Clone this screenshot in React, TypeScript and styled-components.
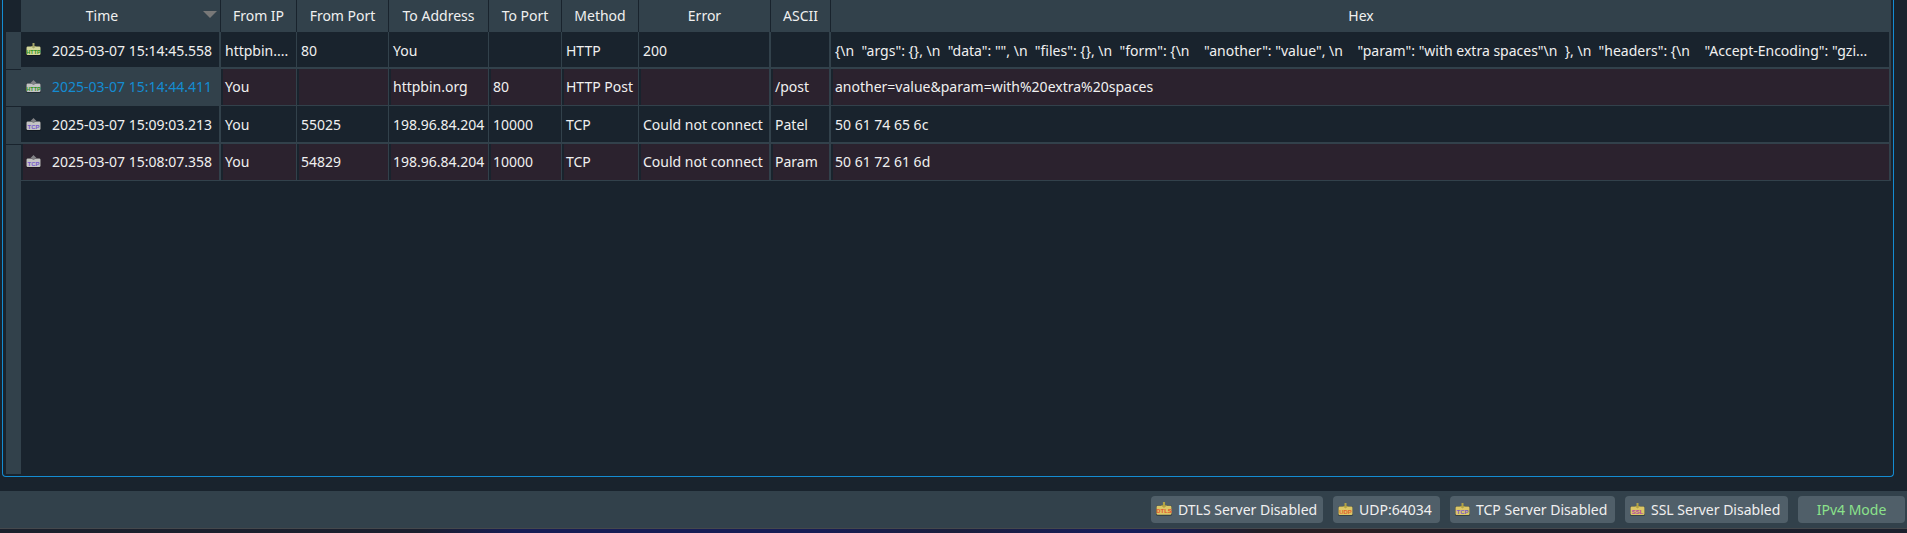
import React from "react";
import styled, { createGlobalStyle } from "styled-components";

const c = {
  base: "#19232d",
  panel: "#32414b",
  button: "#505f69",
  alt: "#2b222e",
  accent: "#148cd2",
  text: "#f0f0f0",
};

const Global = createGlobalStyle`
  * { box-sizing: border-box; }
  body {
    margin: 0;
    background: ${c.base};
    color: ${c.text};
    font: 14px/20px "Noto Sans", sans-serif;
  }
`;

const Window = styled.div`
  display: flex;
  flex-direction: column;
  min-height: 100vh;
`;

const LogPanel = styled.main`
  display: flex;
  flex: 1;
  margin: 0 13px 14px 2px;
  padding: 0 2px 2px 3px;
  border: 1px solid ${c.accent};
  border-top: 0;
  border-radius: 0 0 4px 4px;
`;

const Gutter = styled.div`
  display: flex;
  flex-direction: column;
  flex: none;
  width: 15px;
  margin-top: 32px;
  background: ${c.panel};
`;

const GutterCell = styled.div<{ $height: number }>`
  height: ${(p) => p.$height}px;
  border-bottom: 1px solid ${c.base};
`;

const TableArea = styled.div`
  flex: 1;
  min-width: 0;
`;

const Table = styled.table`
  width: 100%;
  table-layout: fixed;
  border-collapse: separate;
  border-spacing: 0;
`;

const Col = styled.col<{ $width?: number }>`
  width: ${(p) => (p.$width ? `${p.$width}px` : "auto")};
`;

const HeadCell = styled.th`
  height: 32px;
  padding: 0;
  background: ${c.panel};
  border-right: 1px solid ${c.base};
  font-weight: 400;

  &:last-child { border-right: 0; }
`;

const HeadLabel = styled.span<{ $sorted?: boolean }>`
  display: flex;
  align-items: center;
  justify-content: center;
  padding-right: ${(p) => (p.$sorted ? "3px" : "0")};

  span {
    flex: ${(p) => (p.$sorted ? 1 : "none")};
    padding-right: ${(p) => (p.$sorted ? "20px" : "0")};
  }
`;

const SortArrow = styled.svg`
  flex: none;
  display: block;
  margin-bottom: 3px;
`;

const Row = styled.tr<{ $height: number; $divider: number; $alt: boolean }>`
  height: ${(p) => p.$height}px;

  td {
    padding: ${(p) => (p.$alt ? 0 : 2)}px 2px 0 4px;
    background: ${(p) => (p.$alt ? c.alt : c.base)};
    border-bottom: ${(p) => p.$divider}px solid ${c.panel};
    box-shadow: inset ${(p) => (p.$alt ? 2 : 0)}px 0 ${c.base};
  }
`;

const Cell = styled.td<{ $line: number; $selected?: boolean }>`
  && {
    ${(p) => p.$selected && `background: ${c.panel}; color: ${c.accent}; box-shadow: none;`}
  }
  border-right: ${(p) => p.$line}px solid ${c.panel};
  overflow: hidden;
  text-overflow: ellipsis;
  white-space: pre;
`;

const TimeValue = styled.span`
  display: flex;
  align-items: center;
  gap: 11px;
  padding-left: 1px;
`;

const StatusBar = styled.footer`
  display: flex;
  align-items: center;
  justify-content: flex-end;
  gap: 10px;
  height: 37px;
  padding: 0 2px 0 8px;
  background: ${c.panel};
`;

const StatusButton = styled.button<{ $width: number; $ok?: boolean }>`
  display: flex;
  align-items: center;
  justify-content: ${(p) => (p.$ok ? "center" : "flex-start")};
  gap: 6px;
  width: ${(p) => p.$width}px;
  height: 27px;
  padding: ${(p) => (p.$ok ? "1px 0 0" : "1px 0 0 5px")};
  border: 0;
  border-radius: 4px;
  background: ${c.button};
  color: ${(p) => (p.$ok ? "#8be28b" : c.text)};
  font: inherit;
  white-space: nowrap;
`;

const Desktop = styled.div`
  height: 5px;
  border-top: 1px solid #45484c;
  background: linear-gradient(
    90deg,
    #1a202c 0%,
    #1a1f2e 22%,
    #161d55 27%,
    #161d55 43%,
    #1a1f3c 50%,
    #161d5a 58%,
    #161d55 61%,
    #211e26 66%,
    #2a1e22 71%,
    #1c1e2a 78%,
    #1b1f2c 100%
  );
`;

const IconSvg = styled.svg`
  flex: none;
  display: block;
  margin-bottom: 2px;
`;

type Kind = "HTTP" | "TCP" | "UDP" | "DTLS" | "SSL";

const inks: Record<Kind, string> = {
  HTTP: "#2f9420",
  TCP: "#7658cc",
  UDP: "#e4642c",
  DTLS: "#e4502c",
  SSL: "#b040a8",
};

interface PacketIconProps {
  kind: Kind;
  body: string;
  arrow: string;
  up?: boolean;
  size?: number;
}

function PacketIcon({ kind, body, arrow, up, size = 15 }: PacketIconProps) {
  return (
    <IconSvg width={size} height={size - 2} viewBox="0 0 15 13" aria-hidden="true">
      <rect x="0" y="3" width="15" height="10" rx="1.5" fill="#000" fillOpacity="0.3" />
      <rect x="0.5" y="3.5" width="14" height="8.5" rx="1.2" fill={body} />
      <path
        d={up ? "M7.5 0L10.5 3H8.5V5H6.5V3H4.5Z" : "M6.5 0H8.5V3H10.5L7.5 5.5 4.500 3H6.5Z"}
        fill={arrow}
      />
      <text
        x="7.5"
        y="10.5"
        textAnchor="middle"
        fontFamily="Liberation Sans, sans-serif"
        fontWeight="700"
        fontSize={kind.length === 4 ? 5.5 : 6}
        fill={inks[kind]}
      >
        {kind}
      </text>
    </IconSvg>
  );
}

const columns = [
  { label: "Time", width: 200, line: 2 },
  { label: "From IP", width: 76, line: 1 },
  { label: "From Port", width: 92, line: 1 },
  { label: "To Address", width: 100, line: 1 },
  { label: "To Port", width: 73, line: 1 },
  { label: "Method", width: 77, line: 1 },
  { label: "Error", width: 132, line: 2 },
  { label: "ASCII", width: 60, line: 2 },
  { label: "Hex", line: 2 },
];

const hexDump =
  '{\\n  "args": {}, \\n  "data": "", \\n  "files": {}, \\n  "form": {\\n    "another": "value", \\n    "param": "with extra spaces"\\n  }, \\n  "headers": {\\n    "Accept-Encoding": "gzi...';

const rows: { kind: Kind; incoming?: boolean; selected?: boolean; height: number; cells: string[] }[] = [
  { kind: "HTTP", incoming: true, height: 37, cells: ["2025-03-07 15:14:45.558", "httpbin....", "80", "You", "", "HTTP", "200", "", hexDump] },
  { kind: "HTTP", selected: true, height: 37, cells: ["2025-03-07 15:14:44.411", "You", "", "httpbin.org", "80", "HTTP Post", "", "/post", "another=value&param=with%20extra%20spaces"] },
  { kind: "TCP", height: 38, cells: ["2025-03-07 15:09:03.213", "You", "55025", "198.96.84.204", "10000", "TCP", "Could not connect", "Patel", "50 61 74 65 6c"] },
  { kind: "TCP", height: 37, cells: ["2025-03-07 15:08:07.358", "You", "54829", "198.96.84.204", "10000", "TCP", "Could not connect", "Param", "50 61 72 61 6d"] },
];

const servers: { kind: Kind; label: string; width: number }[] = [
  { kind: "DTLS", label: "DTLS Server Disabled", width: 172 },
  { kind: "UDP", label: "UDP:64034", width: 107 },
  { kind: "TCP", label: "TCP Server Disabled", width: 165 },
  { kind: "SSL", label: "SSL Server Disabled", width: 163 },
];

export default function App() {
  return (
    <Window>
      <Global />
      <LogPanel>
        <Gutter aria-hidden="true">
          {rows.slice(0, -1).map((row, i) => (
            <GutterCell key={i} $height={row.height + (i === 0 ? 1 : 0)} />
          ))}
        </Gutter>
        <TableArea>
          <Table>
            <colgroup>
              {columns.map((col) => (
                <Col key={col.label} $width={col.width} />
              ))}
            </colgroup>
            <thead>
              <tr>
                {columns.map((col, i) => (
                  <HeadCell key={col.label} scope="col" aria-sort={i === 0 ? "descending" : undefined}>
                    <HeadLabel $sorted={i === 0}>
                      <span>{col.label}</span>
                      {i === 0 && (
                        <SortArrow width="14" height="7" viewBox="0 0 14 7" aria-hidden="true">
                          <path d="M0 0H14L7 7Z" fill="#787878" />
                        </SortArrow>
                      )}
                    </HeadLabel>
                  </HeadCell>
                ))}
              </tr>
            </thead>
            <tbody>
              {rows.map((row, r) => (
                <Row key={r} $height={row.height} $divider={r % 2 ? 1 : 2} $alt={r % 2 === 1}>
                  {row.cells.map((value, i) => (
                    <Cell key={i} $line={columns[i].line} $selected={row.selected && i === 0}>
                      {i === 0 ? (
                        <TimeValue>
                          <PacketIcon
                            kind={row.kind}
                            up={!row.incoming}
                            body={row.incoming ? "#d3d79b" : "#c4c4c4"}
                            arrow={row.incoming ? "#a3a468" : "#828286"}
                          />
                          {value}
                        </TimeValue>
                      ) : (
                        value
                      )}
                    </Cell>
                  ))}
                </Row>
              ))}
            </tbody>
          </Table>
        </TableArea>
      </LogPanel>
      <StatusBar>
        {servers.map((server) => (
          <StatusButton key={server.kind} type="button" $width={server.width}>
            <PacketIcon kind={server.kind} body="#dcc766" arrow="#b3a344" size={server.kind === "DTLS" ? 16 : 15} />
            {server.label}
          </StatusButton>
        ))}
        <StatusButton type="button" $width={107} $ok>
          IPv4 Mode
        </StatusButton>
      </StatusBar>
      <Desktop />
    </Window>
  );
}
